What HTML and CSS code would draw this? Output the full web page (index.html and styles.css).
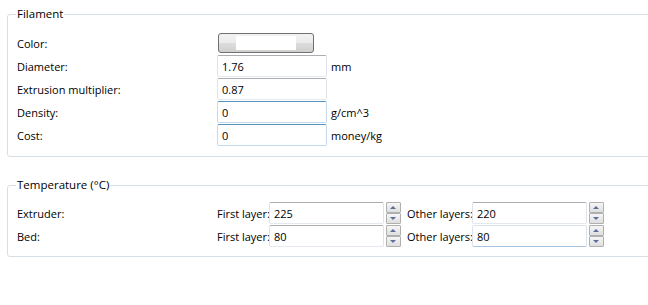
FILE: index.html
```html
<!DOCTYPE html>
<html lang="en">
<head>
  <meta charset="UTF-8" />
  <title>Filament settings</title>
  <link rel="stylesheet" href="styles.css">
</head>
<body>

<fieldset class="group">
  <legend>Filament</legend>
  <div class="rows">
    <label>Color:</label>
    <div class="cell"><button class="color-btn"><span class="swatch"></span></button></div>
    <span></span>

    <label>Diameter:</label>
    <input class="field" type="text" value="1.76">
    <span class="unit">mm</span>

    <label>Extrusion multiplier:</label>
    <input class="field" type="text" value="0.87">
    <span></span>

    <label>Density:</label>
    <input class="field hot" type="text" value="0">
    <span class="unit">g/cm^3</span>

    <label>Cost:</label>
    <input class="field hot" type="text" value="0">
    <span class="unit">money/kg</span>
  </div>
</fieldset>

<fieldset class="group temp">
  <legend>Temperature (°C)</legend>
  <div class="temp-rows">
    <label>Extruder:</label>
    <label class="sub">First layer:</label>
    <input class="field" type="text" value="225">
    <div class="spin"><span class="up"></span><span class="down"></span></div>
    <label class="sub other">Other layers:</label>
    <input class="field" type="text" value="220">
    <div class="spin"><span class="up"></span><span class="down"></span></div>

    <label>Bed:</label>
    <label class="sub">First layer:</label>
    <input class="field" type="text" value="80">
    <div class="spin"><span class="up"></span><span class="down"></span></div>
    <label class="sub other">Other layers:</label>
    <input class="field hot-bottom" type="text" value="80">
    <div class="spin"><span class="up"></span><span class="down"></span></div>
  </div>
</fieldset>

</body>
</html>
```

FILE: styles.css
```css
* {
  box-sizing: border-box;
}

body {
  margin: 0;
  padding-top: 6px;
  font-family: 'Segoe UI', 'Open Sans', sans-serif;
  font-size: 11px;
  color: #000;
  background: #fff;
  overflow: hidden;
}

.group {
  margin: 0 0 0 7px;
  width: 700px;
  padding: 10px 0 10px 8px;
  border: 1px solid #d5dfe5;
  border-radius: 3px;
}

.group legend {
  padding: 0 1px;
  line-height: 16px;
  font-size: 11.5px;
}

.temp {
  margin-top: 20px;
  padding-top: 9px;
  padding-bottom: 9px;
}

.rows {
  display: grid;
  grid-template-columns: 201px 110px auto;
  grid-auto-rows: 22px;
  row-gap: 1px;
  align-items: center;
}

label {
  padding-left: 1px;
}

.cell {
  display: flex;
  align-items: center;
}

.color-btn {
  width: 96px;
  height: 20px;
  margin-left: 1px;
  padding: 0;
  border: 1px solid #707070;
  border-radius: 3px;
  background: linear-gradient(#f2f2f2 0%, #ebebeb 50%, #dddddd 50%, #cfcfcf 100%);
  display: flex;
  align-items: center;
  justify-content: center;
}

.swatch {
  display: block;
  width: 60px;
  height: 14px;
  background: #fff;
}

.field {
  width: 100%;
  height: 22px;
  margin: 0;
  padding: 0 4px;
  font: inherit;
  color: #000;
  border: 1px solid #e2e3ea;
  border-top-color: #abadb3;
  border-bottom-color: #e3e9ef;
  border-radius: 2px;
  background: #fff;
  outline: none;
}

.field.hot {
  border-color: #c5daed;
  border-top-color: #5794bf;
}

.field.hot-bottom {
  border-color: #dbe4ee;
  border-bottom-color: #a9c7e3;
}

.unit {
  padding-left: 4px;
}

.temp-rows {
  display: grid;
  grid-template-columns: 201px 52px 115px 16px 72px 115px 16px;
  grid-auto-rows: 22px;
  row-gap: 1px;
  align-items: center;
}

.temp-rows .sub {
  padding-left: 0;
  white-space: nowrap;
}

.temp-rows .other {
  padding-left: 7px;
}

.spin {
  height: 22px;
  margin-left: 2px;
  width: 15px;
  display: flex;
  flex-direction: column;
}

.spin span {
  position: relative;
  height: 11px;
  border: 1px solid #b0b0b0;
  border-radius: 1px;
  background: linear-gradient(#f6f6f6, #dedede);
}

.spin span::after {
  content: '';
  position: absolute;
  left: 3px;
  top: 3px;
  border-left: 3px solid transparent;
  border-right: 3px solid transparent;
}

.spin .up::after {
  border-bottom: 3px solid #5b6d9a;
}

.spin .down::after {
  border-top: 3px solid #5b6d9a;
}
```
